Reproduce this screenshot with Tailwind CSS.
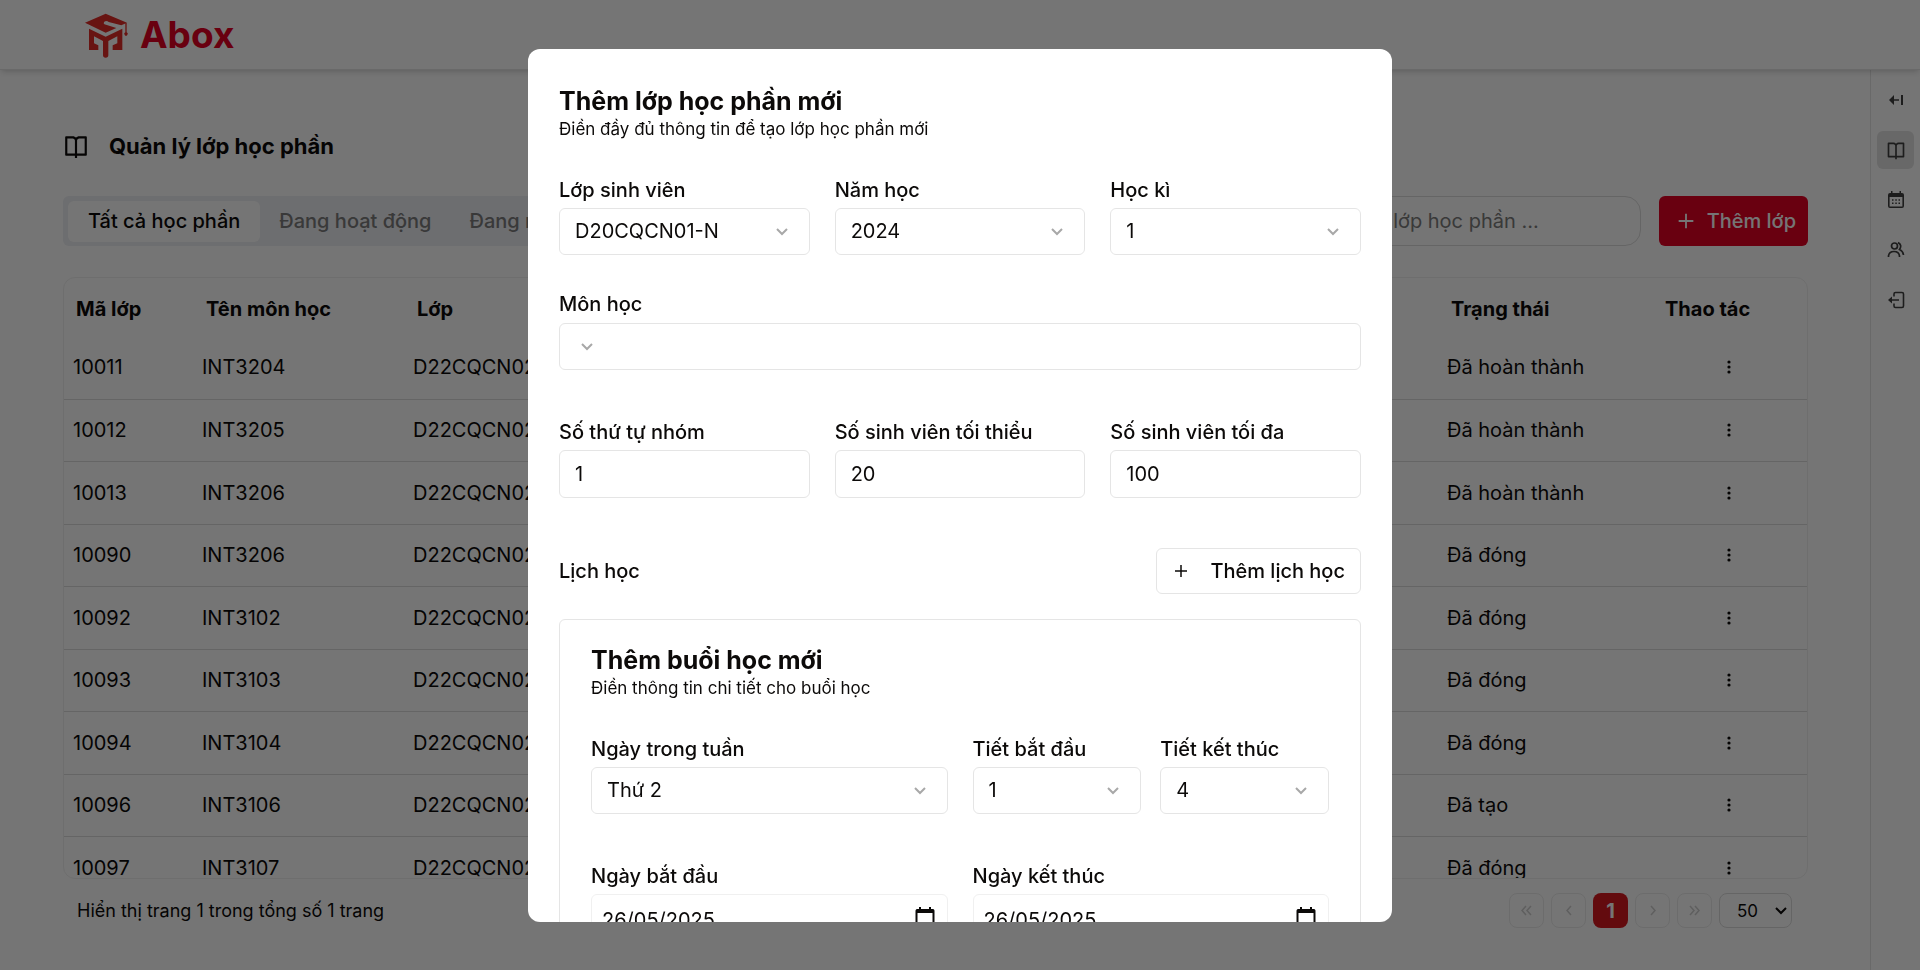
<!DOCTYPE html>
<html lang="vi">
<head>
<meta charset="utf-8">
<meta name="viewport" content="width=device-width, initial-scale=1">
<title>Abox - Quản lý lớp học phần</title>
<script src="https://cdn.jsdelivr.net/npm/@tailwindcss/browser@4"></script>
</head>
<body class="h-screen overflow-hidden bg-white font-['Inter','Noto_Sans',sans-serif] text-[20px] leading-[30px] text-[#0c0a09]">

<svg class="hidden" aria-hidden="true">
  <symbol id="book" viewBox="0 0 24 24"><path fill="currentColor" d="M13 21V23H11V21H3C2.45 21 2 20.55 2 20V4C2 3.45 2.45 3 3 3H9C10.2 3 11.27 3.53 12 4.36C12.73 3.53 13.8 3 15 3H21C21.55 3 22 3.45 22 4V20C22 20.55 21.55 21 21 21H13ZM20 19V5H15C13.9 5 13 5.9 13 7V19H20ZM11 19V7C11 5.9 10.1 5 9 5H4V19H11Z"/></symbol>
  <symbol id="plus" viewBox="0 0 24 24"><path stroke="currentColor" stroke-width="2" d="M12 4V20M4 12H20"/></symbol>
  <symbol id="chevron" viewBox="0 0 12 8"><path fill="none" stroke="currentColor" stroke-width="2" d="M1 1L6 6L11 1"/></symbol>
  <symbol id="calendar" viewBox="0 0 20 22"><path fill="currentColor" fill-rule="evenodd" d="M4 0H6V2H14V0H16V2H18C19 2 19.500 3 19.500 4V20C19.500 21 19 22 18 22H2C1 22 .5 21 .5 20V4C.5 3 1 2 2 2H4ZM2.500 6V20H17.500V6Z"/></symbol>
</svg>

<div class="flex h-full flex-col">
  <header class="z-10 flex h-[70px] shrink-0 items-center border-b border-[#e5e5e5] pl-20 shadow-md">
    <a href="#" class="flex items-center">
      <svg class="h-14 w-[54px] text-[#e22d28]" viewBox="120 18 162 168" fill="currentColor" aria-hidden="true">
        <path d="M197 38L261 65L244 73L206 63Q204 60 198 60Q191 61 191 67Q192 71 198 71L229 81L197 95L135 65Z"/>
        <path d="M256 66H260V94A5 5 0 1 1 256 94Z"/>
        <path d="M147 83L197 107L247 83V147H218V133L232 127V106L205 120V163Q205 170 197 170Q189 170 189 163V120L162 106V127L175 133V147H147Z"/>
      </svg>
      <span class="ml-[6px] text-[37px] font-bold text-[#e40024]">Abox</span>
    </a>
  </header>

  <div class="flex min-h-0 grow">
    <main class="flex min-w-0 grow flex-col pr-[62px] pl-[63px]">
      <h1 class="mt-[61px] flex h-[30px] items-center text-[22px] font-bold">
        <svg class="mr-5 h-[26px] w-[26px]"><use href="#book"/></svg>Quản lý lớp học phần
      </h1>

      <div class="mt-[35px] flex h-[50px] shrink-0">
        <div class="flex items-center rounded-md bg-[#edeff3] px-[5px] font-medium text-[#7c7c7c]" role="tablist">
          <button role="tab" aria-selected="true" class="h-[41px] rounded-md bg-white px-5 text-[#0c0a09]">Tất cả học phần</button>
          <button role="tab" aria-selected="false" class="h-[41px] px-[19px]">Đang hoạt động</button>
          <button role="tab" aria-selected="false" class="h-[41px] px-[19px]">Đang mở</button>
        </div>
        <input type="search" aria-label="Tìm kiếm" placeholder="Tìm kiếm lớp học phần ..." class="ml-auto w-[356px] rounded-2xl border border-[#dcdcdc] px-4 placeholder:text-[#7c7c7c]">
        <button class="ml-[18px] flex items-center rounded-md bg-[#e40024] pr-3 pl-4 font-medium text-white"><svg class="mr-[10px] h-[22px] w-[22px] fill-none"><use href="#plus"/></svg>Thêm lớp</button>
      </div>

      <div class="mt-[31px] h-[602px] shrink-0 overflow-hidden rounded-xl border border-[#f0f0f0]">
        <table class="w-full table-fixed text-left">
          <colgroup><col class="w-[128px]"><col class="w-[211px]"><col class="w-[212px]"><col><col class="w-[214px]"><col class="w-[157px]"></colgroup>
          <thead><tr class="h-[58px]"><th class="px-3 pt-[3px]">Mã lớp</th><th class="px-[14px] pt-[3px]">Tên môn học</th><th class="px-[14px] pt-[3px]">Lớp</th><td></td><th class="px-[15px] pt-[3px]">Trạng thái</th><th class="px-[15px] pt-[3px]">Thao tác</th></tr></thead>
          <tbody id="rows"></tbody>
        </table>
      </div>

      <div class="mt-[14px] flex h-[35px] items-center pr-4 pl-[14px] text-[17px]">
        <p class="text-[18px]">Hiển thị trang 1 trong tổng số 1 trang</p>
        <nav class="ml-auto flex gap-[7px]" aria-label="Phân trang">
          <button disabled aria-label="Trang đầu" class="grid h-[35px] w-[35px] place-items-center rounded-lg border border-[#ececec] text-[#cfcfcf]"><svg class="h-[11px] w-[11px]" viewBox="0 0 11 11" fill="none" stroke="currentColor" stroke-width="1.500"><path d="M5 1L1 5.5L5 10M10 1L6 5.5L10 10"/></svg></button>
          <button disabled aria-label="Trang trước" class="grid h-[35px] w-[35px] place-items-center rounded-lg border border-[#ececec] text-[#cfcfcf]"><svg class="h-[11px] w-[6px]" viewBox="0 0 6 11" fill="none" stroke="currentColor" stroke-width="1.500"><path d="M5 1L1 5.5L5 10"/></svg></button>
          <button aria-current="page" class="h-[35px] w-[35px] rounded-lg bg-[#d71920] text-[20px] font-bold text-white">1</button>
          <button disabled aria-label="Trang sau" class="grid h-[35px] w-[35px] place-items-center rounded-lg border border-[#ececec] text-[#cfcfcf]"><svg class="h-[11px] w-[6px]" viewBox="0 0 6 11" fill="none" stroke="currentColor" stroke-width="1.500"><path d="M1 1L5 5.5L1 10"/></svg></button>
          <button disabled aria-label="Trang cuối" class="grid h-[35px] w-[35px] place-items-center rounded-lg border border-[#ececec] text-[#cfcfcf]"><svg class="h-[11px] w-[11px]" viewBox="0 0 11 11" fill="none" stroke="currentColor" stroke-width="1.500"><path d="M1 1L5 5.5L1 10M6 1L10 5.5L6 10"/></svg></button>
          <div class="grid items-center">
            <select aria-label="Số dòng mỗi trang" class="col-start-1 row-start-1 h-[35px] w-[73px] appearance-none rounded-lg border border-[#dcdcdc] pl-[17px]"><option>50</option></select>
            <svg class="pointer-events-none col-start-1 row-start-1 mr-[5px] h-2 w-3 justify-self-end"><use href="#chevron"/></svg>
          </div>
        </nav>
      </div>
    </main>

    <aside class="flex w-[50px] shrink-0 flex-col items-center gap-3 border-l border-[#e5e5e5] pt-[11px] text-[#404040]">
      <button aria-label="Mở rộng" class="grid h-[38px] w-[37px] place-items-center rounded-md"><svg class="h-[18px] w-[18px]" viewBox="0 0 18 18"><path fill="currentColor" d="M2 9L7 4V8.200H12V9.800H7V14ZM14 4H16V14H14Z"/></svg></button>
      <a href="#" aria-label="Lớp học phần" class="grid h-[38px] w-[37px] place-items-center rounded-md bg-[#e3e3e3]"><svg class="h-5 w-5"><use href="#book"/></svg></a>
      <a href="#" aria-label="Lịch" class="grid h-[38px] w-[37px] place-items-center rounded-md"><svg class="h-[18px] w-[18px]" viewBox="0 0 18 18" fill="currentColor"><path fill-rule="evenodd" d="M4 0H5.500V2H12.500V0H14V2H15Q17 2 17 4V15Q17 17 15 17H3Q1 17 1 15V4Q1 2 3 2H4ZM2.600 6V15.400H15.400V6Z"/><path d="M5 8.200h1.500v1.500H5zM8.300 8.200h1.500v1.500H8.300zM11.500 8.200h1.500v1.500h-1.500zM5 11.500h1.500v1.500H5zM8.300 11.500h1.500v1.500H8.300zM11.500 11.500h1.500v1.500h-1.500z"/></svg></a>
      <a href="#" aria-label="Sinh viên" class="grid h-[38px] w-[37px] place-items-center rounded-md"><svg class="h-[18px] w-[18px]" viewBox="0 0 18 18" fill="none" stroke="currentColor" stroke-width="1.7"><circle cx="7.5" cy="5" r="3"/><path d="M1.5 16V15Q2 10.5 7 10.5Q12 10.5 12.5 15V16M11 1.5Q15.5 4 12.5 8.5Q16 10 16.5 14"/></svg></a>
      <a href="#" aria-label="Đăng xuất" class="grid h-[38px] w-[37px] place-items-center rounded-md"><svg class="h-[18px] w-[18px]" viewBox="0 0 18 18" fill="none" stroke="currentColor" stroke-width="1.6"><path d="M7 5.5V3Q7 1.5 8.5 1.5H15Q16.500 1.500 16.500 3V15Q16.500 16.500 15 16.500H8.500Q7 16.500 7 15V12.500M12 9H4"/><path fill="currentColor" stroke="none" d="M1 9L5 5.500V12.500Z"/></svg></a>
    </aside>
  </div>
</div>

<div class="fixed inset-0 z-20 flex items-center justify-center bg-black/54">
  <form role="dialog" aria-modal="true" aria-labelledby="dialog-title" class="h-[90vh] w-[45vw] overflow-hidden rounded-xl bg-white px-[31px] pt-[34px]">
    <h2 id="dialog-title" class="text-[25px] leading-9 font-bold">Thêm lớp học phần mới</h2>
    <p class="text-[17px] leading-5">Điền đầy đủ thông tin để tạo lớp học phần mới</p>

    <div class="mt-9 grid grid-cols-3 gap-x-[25px]">
      <div>
        <label for="class" class="mb-[3px] block font-medium">Lớp sinh viên</label>
        <div class="grid items-center"><select id="class" class="col-start-1 row-start-1 h-[47px] w-full appearance-none rounded-md border border-[#e5e5e5] px-[15px]"><option>D20CQCN01-N</option></select><svg class="pointer-events-none col-start-1 row-start-1 mt-0.5 mr-[22px] h-2 w-3 justify-self-end text-[#a8a8a8]"><use href="#chevron"/></svg></div>
      </div>
      <div>
        <label for="year" class="mb-[3px] block font-medium">Năm học</label>
        <div class="grid items-center"><select id="year" class="col-start-1 row-start-1 h-[47px] w-full appearance-none rounded-md border border-[#e5e5e5] px-[15px]"><option>2024</option></select><svg class="pointer-events-none col-start-1 row-start-1 mt-0.5 mr-[22px] h-2 w-3 justify-self-end text-[#a8a8a8]"><use href="#chevron"/></svg></div>
      </div>
      <div>
        <label for="term" class="mb-[3px] block font-medium">Học kì</label>
        <div class="grid items-center"><select id="term" class="col-start-1 row-start-1 h-[47px] w-full appearance-none rounded-md border border-[#e5e5e5] px-[15px]"><option>1</option></select><svg class="pointer-events-none col-start-1 row-start-1 mt-0.5 mr-[22px] h-2 w-3 justify-self-end text-[#a8a8a8]"><use href="#chevron"/></svg></div>
      </div>
    </div>

    <div class="mt-[34px]">
      <label for="subject" class="mb-1 block font-medium">Môn học</label>
      <div class="grid items-center"><select id="subject" class="col-start-1 row-start-1 h-[47px] w-full appearance-none rounded-md border border-[#e5e5e5] px-[15px]"><option></option></select><svg class="pointer-events-none col-start-1 row-start-1 mt-0.5 ml-[22px] h-2 w-3 text-[#a8a8a8]"><use href="#chevron"/></svg></div>
    </div>

    <div class="mt-[47px] grid grid-cols-3 gap-x-[25px]">
      <div><label for="group" class="mb-[3px] block font-medium">Số thứ tự nhóm</label><input id="group" type="number" value="1" class="h-12 w-full rounded-md border border-[#e5e5e5] px-[15px]"></div>
      <div><label for="min" class="mb-[3px] block font-medium">Số sinh viên tối thiểu</label><input id="min" type="number" value="20" class="h-12 w-full rounded-md border border-[#e5e5e5] px-[15px]"></div>
      <div><label for="max" class="mb-[3px] block font-medium">Số sinh viên tối đa</label><input id="max" type="number" value="100" class="h-12 w-full rounded-md border border-[#e5e5e5] px-[15px]"></div>
    </div>

    <div class="mt-[50px] flex items-center justify-between font-medium">
      <h3>Lịch học</h3>
      <button type="button" class="flex h-[46px] items-center rounded-md border border-[#e5e5e5] px-[15px]"><svg class="mr-5 h-[18px] w-[18px] fill-none"><use href="#plus"/></svg>Thêm lịch học</button>
    </div>

    <section class="mt-[25px] rounded-md border border-[#e5e5e5] px-[31px] pt-[22px] pb-8">
      <h3 class="text-[25px] leading-9 font-bold">Thêm buổi học mới</h3>
      <p class="text-[17px] leading-5">Điền thông tin chi tiết cho buổi học</p>
      <div class="mt-9 grid grid-cols-2 gap-x-[25px] gap-y-[47px]">
        <div>
          <label for="day" class="mb-[3px] block font-medium">Ngày trong tuần</label>
          <div class="grid items-center"><select id="day" class="col-start-1 row-start-1 h-[47px] w-full appearance-none rounded-md border border-[#e5e5e5] px-[15px]"><option>Thứ 2</option></select><svg class="pointer-events-none col-start-1 row-start-1 mt-0.5 mr-[22px] h-2 w-3 justify-self-end text-[#a8a8a8]"><use href="#chevron"/></svg></div>
        </div>
        <div class="grid grid-cols-2 gap-x-[19px]">
          <div>
            <label for="from" class="mb-[3px] block font-medium">Tiết bắt đầu</label>
            <div class="grid items-center"><select id="from" class="col-start-1 row-start-1 h-[47px] w-full appearance-none rounded-md border border-[#e5e5e5] px-[15px]"><option>1</option></select><svg class="pointer-events-none col-start-1 row-start-1 mt-0.5 mr-[22px] h-2 w-3 justify-self-end text-[#a8a8a8]"><use href="#chevron"/></svg></div>
          </div>
          <div>
            <label for="to" class="mb-[3px] block font-medium">Tiết kết thúc</label>
            <div class="grid items-center"><select id="to" class="col-start-1 row-start-1 h-[47px] w-full appearance-none rounded-md border border-[#e5e5e5] px-[15px]"><option>4</option></select><svg class="pointer-events-none col-start-1 row-start-1 mt-0.5 mr-[22px] h-2 w-3 justify-self-end text-[#a8a8a8]"><use href="#chevron"/></svg></div>
          </div>
        </div>
        <div>
          <label for="start" class="mb-[3px] block font-medium">Ngày bắt đầu</label>
          <div class="grid items-center"><input id="start" type="text" value="26/05/2025" class="col-start-1 row-start-1 h-[53px] w-full rounded-md border border-[#f0f0f0] px-[10px]"><svg class="col-start-1 row-start-1 mr-[13px] mb-1 h-[22px] w-5 justify-self-end"><use href="#calendar"/></svg></div>
        </div>
        <div>
          <label for="end" class="mb-[3px] block font-medium">Ngày kết thúc</label>
          <div class="grid items-center"><input id="end" type="text" value="26/05/2025" class="col-start-1 row-start-1 h-[53px] w-full rounded-md border border-[#f0f0f0] px-[10px]"><svg class="col-start-1 row-start-1 mr-[13px] mb-1 h-[22px] w-5 justify-self-end"><use href="#calendar"/></svg></div>
        </div>
      </div>
    </section>
  </form>
</div>

<script>
const classes = [
  ['10011', 'INT3204', 'Đã hoàn thành'], ['10012', 'INT3205', 'Đã hoàn thành'], ['10013', 'INT3206', 'Đã hoàn thành'],
  ['10090', 'INT3206', 'Đã đóng'], ['10092', 'INT3102', 'Đã đóng'], ['10093', 'INT3103', 'Đã đóng'],
  ['10094', 'INT3104', 'Đã đóng'], ['10096', 'INT3106', 'Đã tạo'], ['10097', 'INT3107', 'Đã đóng'],
];
document.getElementById('rows').innerHTML = classes.map(([id, subject, status]) => `
  <tr class="h-[63px] border-b border-[#dcdcdc] even:h-[62px]">
    <td class="px-[9px]">${id}</td><td class="px-[10px]">${subject}</td><td class="px-[10px]">D22CQCN02-N</td><td></td><td class="px-[11px]">${status}</td>
    <td><button aria-label="Thao tác" class="mx-auto grid h-8 w-8 place-items-center"><svg class="h-4 w-1" viewBox="0 0 4 16" fill="currentColor"><circle cx="2" cy="3" r="1.600"/><circle cx="2" cy="8" r="1.600"/><circle cx="2" cy="13" r="1.600"/></svg></button></td>
  </tr>`).join('');
</script>
</body>
</html>
